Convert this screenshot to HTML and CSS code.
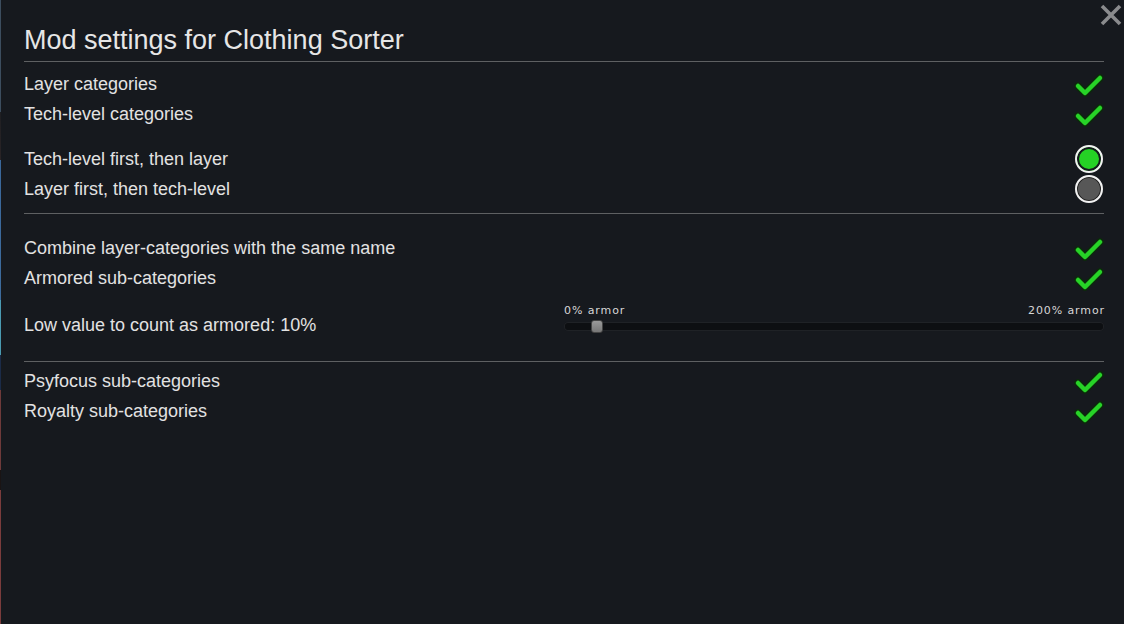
FILE: index.html
```html
<!DOCTYPE html>
<html>
<head>
<meta charset="utf-8">
<link rel="stylesheet" href="styles.css">
</head>
<body>
<div class="screen">
  <div class="edge"></div>
  <div class="panel">
    <button class="close" aria-label="Close">
      <svg width="24" height="24" viewBox="0 0 24 24"><path d="M3 3 L21 21 M21 3 L3 21" stroke="#8a8b8d" stroke-width="3.6" fill="none"/></svg>
    </button>
    <h1 class="title">Mod settings for Clothing Sorter</h1>
    <div class="sep"></div>

    <div class="group g1">
      <div class="row"><span>Layer categories</span><span class="check"><svg width="30" height="28" viewBox="0 0 30 28"><path d="M4 16 L11 23 L26 8" stroke="#0c2a0c" stroke-width="7.5" fill="none" stroke-linecap="round" stroke-linejoin="round"/><path d="M4 16 L11 23 L26 8" stroke="#27d327" stroke-width="4.5" fill="none" stroke-linecap="round" stroke-linejoin="round"/></svg></span></div>
      <div class="row"><span>Tech-level categories</span><span class="check"><svg width="30" height="28" viewBox="0 0 30 28"><path d="M4 16 L11 23 L26 8" stroke="#0c2a0c" stroke-width="7.5" fill="none" stroke-linecap="round" stroke-linejoin="round"/><path d="M4 16 L11 23 L26 8" stroke="#27d327" stroke-width="4.5" fill="none" stroke-linecap="round" stroke-linejoin="round"/></svg></span></div>
    </div>

    <div class="group g2">
      <div class="row"><span>Tech-level first, then layer</span><span class="radio on"></span></div>
      <div class="row"><span>Layer first, then tech-level</span><span class="radio"></span></div>
    </div>
    <div class="sep s2"></div>

    <div class="group g3">
      <div class="row"><span>Combine layer-categories with the same name</span><span class="check"><svg width="30" height="28" viewBox="0 0 30 28"><path d="M4 16 L11 23 L26 8" stroke="#0c2a0c" stroke-width="7.5" fill="none" stroke-linecap="round" stroke-linejoin="round"/><path d="M4 16 L11 23 L26 8" stroke="#27d327" stroke-width="4.5" fill="none" stroke-linecap="round" stroke-linejoin="round"/></svg></span></div>
      <div class="row"><span>Armored sub-categories</span><span class="check"><svg width="30" height="28" viewBox="0 0 30 28"><path d="M4 16 L11 23 L26 8" stroke="#0c2a0c" stroke-width="7.5" fill="none" stroke-linecap="round" stroke-linejoin="round"/><path d="M4 16 L11 23 L26 8" stroke="#27d327" stroke-width="4.5" fill="none" stroke-linecap="round" stroke-linejoin="round"/></svg></span></div>
      <div class="row slider-row">
        <span>Low value to count as armored: 10%</span>
        <div class="slider">
          <div class="slider-labels"><span>0% armor</span><span>200% armor</span></div>
          <div class="track"><div class="handle" style="left: 5%"></div></div>
        </div>
      </div>
    </div>
    <div class="sep s3"></div>

    <div class="group g4">
      <div class="row"><span>Psyfocus sub-categories</span><span class="check"><svg width="30" height="28" viewBox="0 0 30 28"><path d="M4 16 L11 23 L26 8" stroke="#0c2a0c" stroke-width="7.5" fill="none" stroke-linecap="round" stroke-linejoin="round"/><path d="M4 16 L11 23 L26 8" stroke="#27d327" stroke-width="4.5" fill="none" stroke-linecap="round" stroke-linejoin="round"/></svg></span></div>
      <div class="row"><span>Royalty sub-categories</span><span class="check"><svg width="30" height="28" viewBox="0 0 30 28"><path d="M4 16 L11 23 L26 8" stroke="#0c2a0c" stroke-width="7.5" fill="none" stroke-linecap="round" stroke-linejoin="round"/><path d="M4 16 L11 23 L26 8" stroke="#27d327" stroke-width="4.5" fill="none" stroke-linecap="round" stroke-linejoin="round"/></svg></span></div>
    </div>
  </div>
</div>
</body>
</html>
```
FILE: styles.css
```css
* { box-sizing: border-box; }
html, body { margin: 0; padding: 0; }
body {
  width: 1124px;
  height: 624px;
  overflow: hidden;
  background: #16191e;
  font-family: "Liberation Sans", Arial, sans-serif;
  color: #e2e2e2;
}
.screen {
  display: flex;
  width: 1124px;
  height: 624px;
}
.edge {
  width: 1px;
  flex: none;
  background: linear-gradient(to bottom,
    #3c4d5e 0px, #3c4d5e 112px,
    #1f1f22 112px, #2a2426 160px,
    #3a679a 160px, #3d6b9c 300px,
    #4b9bb3 300px, #4a9ab0 355px,
    #1b2b48 355px, #1b2b48 390px,
    #6e3a3a 390px, #6e3a3a 470px,
    #1a1414 470px, #1a1414 490px,
    #7a3c3c 490px, #7a3c3c 624px);
}
.panel {
  position: relative;
  flex: 1;
  padding: 23px 20px 0 23px;
  background: #16191e;
}
.close {
  position: absolute;
  top: 3px;
  right: 1px;
  padding: 0;
  border: 0;
  background: none;
  width: 24px;
  height: 24px;
}
.title {
  margin: 0;
  font-size: 27px;
  font-weight: normal;
  line-height: 34px;
  color: #e6e6e6;
  height: 34px;
}
.sep {
  height: 1px;
  background: #5e6062;
  margin-top: 4px;
}
.group { display: flex; flex-direction: column; }
.g1 { margin-top: 7px; }
.g2 { margin-top: 15px; }
.s2 { margin-top: 9px; }
.g3 { margin-top: 19px; }
.s3 { margin-top: 15px; }
.g4 { margin-top: 4px; }
.row {
  display: flex;
  align-items: center;
  justify-content: space-between;
  height: 30px;
  font-size: 18px;
}
.check {
  width: 30px;
  height: 28px;
  display: flex;
}
.radio {
  width: 28px;
  height: 28px;
  margin-right: 1px;
  border-radius: 50%;
  border: 2px solid #f2f2f2;
  background: #575757;
  box-shadow: inset 0 0 0 1px #222;
}
.radio.on {
  background: #25d125;
  box-shadow: inset 0 0 0 2px #16191e;
}
.slider-row {
  height: 42px;
  margin-top: 11px;
}
.slider {
  width: 540px;
  align-self: flex-start;
  display: flex;
  flex-direction: column;
}
.slider-labels {
  display: flex;
  justify-content: space-between;
  font-family: "DejaVu Sans", sans-serif;
  font-size: 11px;
  letter-spacing: 0.9px;
  color: #d6d6d6;
  height: 15px;
  line-height: 15px;
  margin-top: -1px;
  margin-right: -1px;
}
.track {
  position: relative;
  height: 9px;
  margin-top: 4px;
  border-radius: 4px;
  background: #0d0f12;
  box-shadow: inset 0 0 0 1px #1f2226;
}
.handle {
  position: absolute;
  top: -2px;
  width: 12px;
  height: 13px;
  border-radius: 3px;
  background: linear-gradient(#9a9a9a, #777);
  border: 1px solid #444;
}
```
